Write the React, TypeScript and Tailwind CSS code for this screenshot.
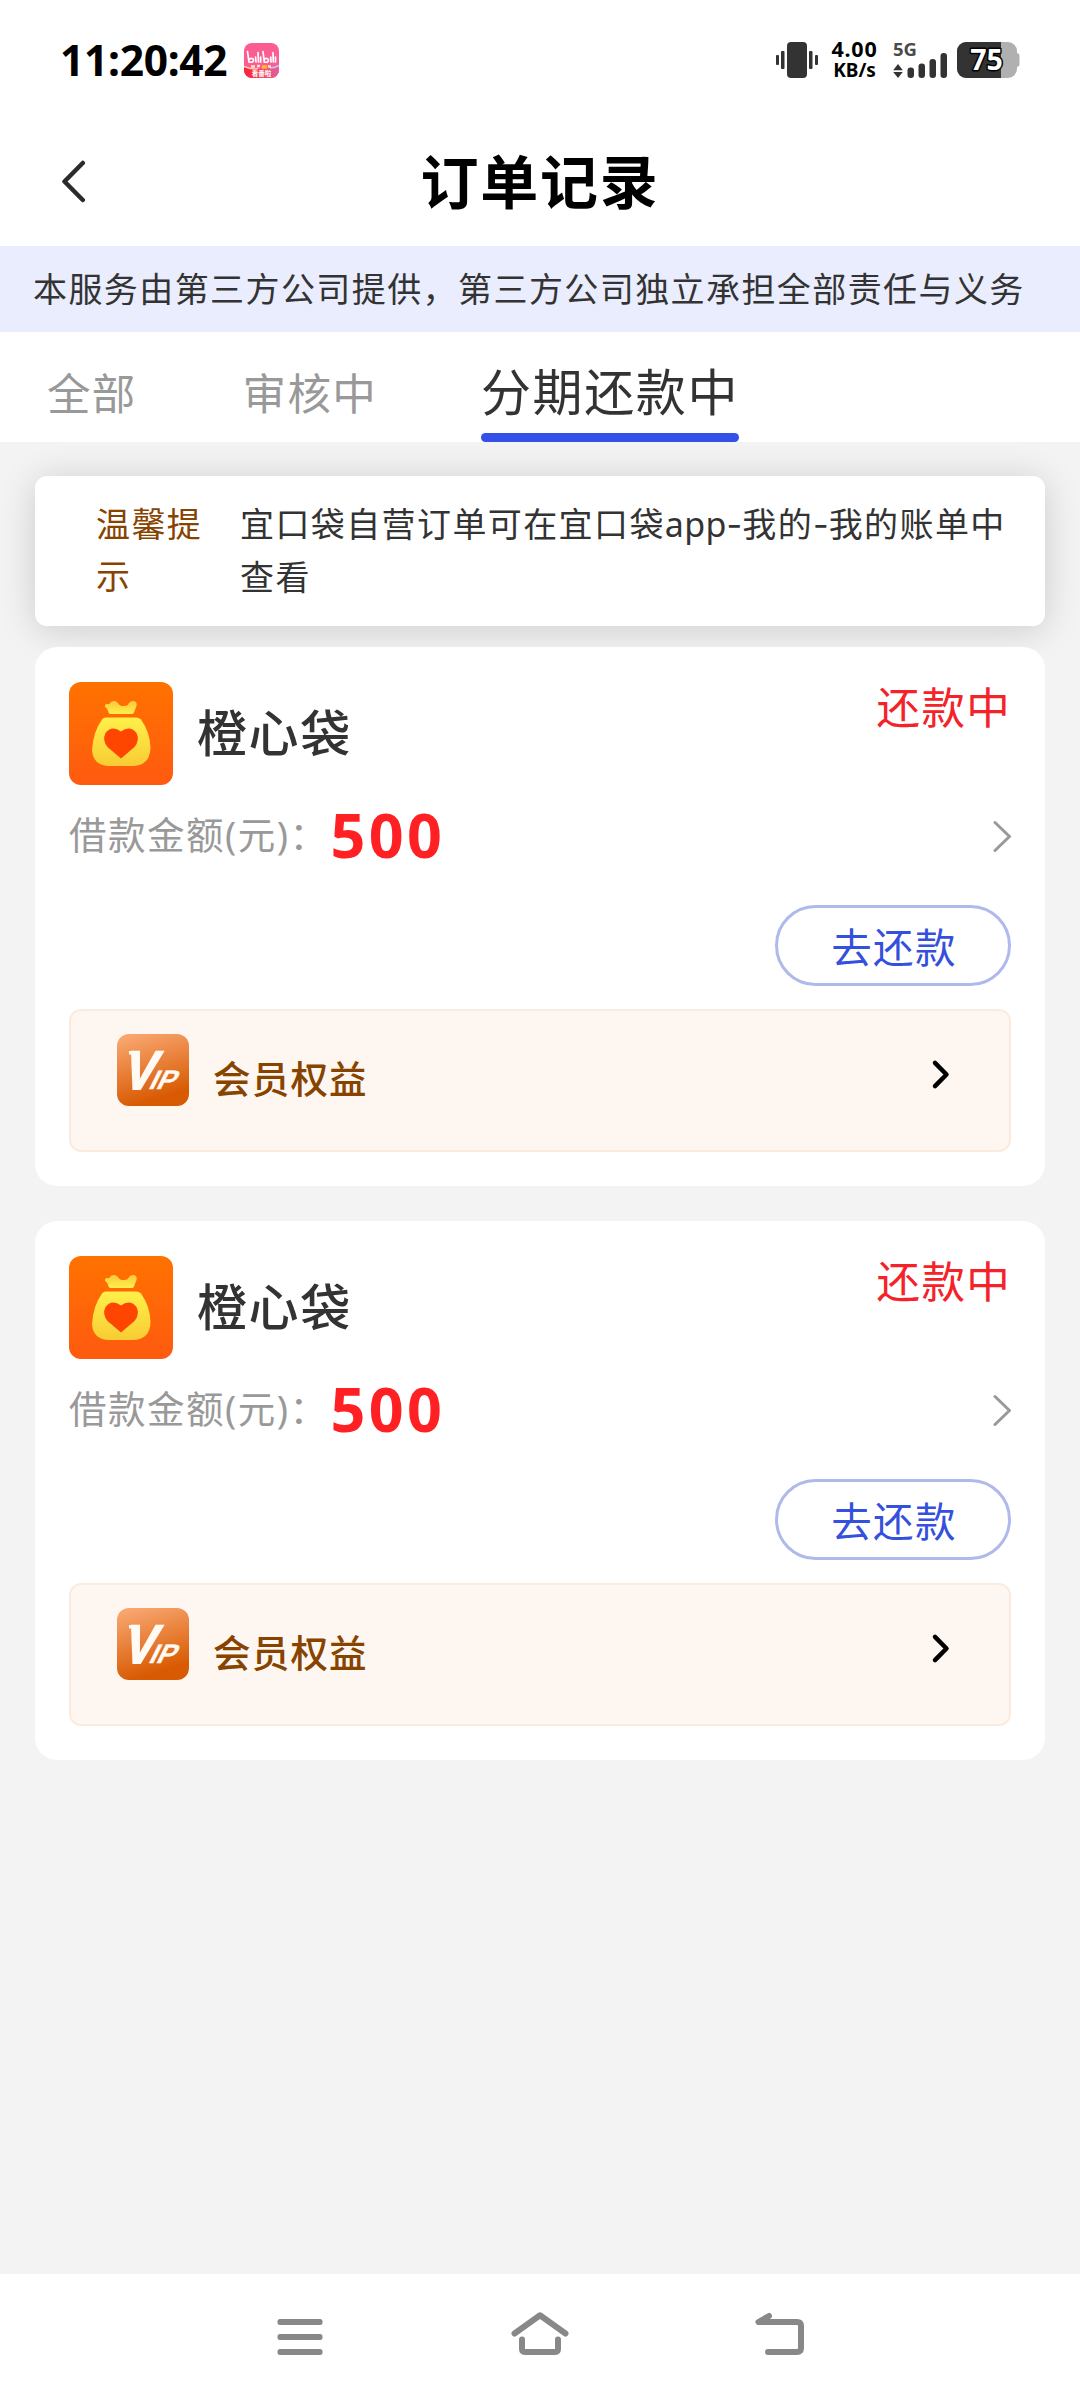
import React from "react";

function StatusBar() {
  return (
    <div className="flex h-[120px] shrink-0 items-center pl-[60px] pr-[60px]">
      <span className="flex w-[184px] whitespace-nowrap text-[42.500px] font-bold leading-[42px] tracking-[-0.300px] text-black">
        11:20:42
      </span>
      <svg width="35" height="35" viewBox="0 0 35 35">
        <defs>
          <linearGradient id="appBottom" x1="0" y1="0" x2="1" y2="0">
            <stop offset="0" stopColor="#fb1f35" />
            <stop offset="0.6" stopColor="#f3486a" />
            <stop offset="1" stopColor="#e0609c" />
          </linearGradient>
          <clipPath id="appClip">
            <rect width="35" height="35" rx="8" />
          </clipPath>
        </defs>
        <g clipPath="url(#appClip)">
          <rect width="35" height="35" fill="#fb5c92" />
          <path d="M0 23 Q17 29 35 23 V35 H0 Z" fill="url(#appBottom)" />
          <path d="M0 23.5 Q8 27 14 25.5" stroke="#ffd0b0" strokeWidth="1.4" fill="none" />
          <path d="M26 25 Q31 25 35 22.5" stroke="#b9c6ff" strokeWidth="1.6" fill="none" />
          <g stroke="#fff" strokeWidth="1.700" strokeLinecap="round" fill="none">
            <path d="M3.500 8.500 L5 19 Q9.500 20 9.500 17 Q9 14.500 5.500 16" />
            <path d="M11.500 14 L12 19 M14 9.500 L14.500 19 M16.700 14 V19" />
            <path d="M19 8.500 L20.300 19 Q24.500 20 24.500 17 Q24 14.500 20.500 16" />
            <path d="M26.700 14 L27 19 M29 9.500 L29.300 19 M31.500 14 V19" />
          </g>
          <path d="M7 23.500h4M13 23h3M24 23.500h3" stroke="#ffe1c4" strokeWidth="2.400" />
          <path d="M18 24h5" stroke="#ffc21c" strokeWidth="3.500" />
          <text x="17.500" y="33.300" fontSize="6.500" fontWeight="700" fill="#fff" textAnchor="middle">
            看番啦
          </text>
        </g>
      </svg>
      <div className="ml-auto flex h-[36px] items-stretch">
        <svg width="42" height="36" viewBox="0 0 42 36" fill="#333">
          <rect x="0" y="13" width="3" height="10" rx="1" />
          <rect x="5" y="9" width="3.500" height="18" rx="1" />
          <rect x="11" y="0" width="20" height="36" rx="4" />
          <rect x="33" y="9" width="3.500" height="18" rx="1" />
          <rect x="39" y="13" width="3" height="10" rx="1" />
        </svg>
        <div className="ml-[13px] flex w-[47px] flex-col items-center whitespace-nowrap font-bold text-black">
          <span className="h-[17px] text-[21.500px] leading-[14px] tracking-[0.800px]">4.00</span>
          <span className="h-[19px] text-[19px] leading-[22px]">KB/s</span>
        </div>
        <svg className="ml-[15px] overflow-visible" width="55" height="36" viewBox="0 0 55 36" fill="#333">
          <text x="0" y="13.800" fontSize="18.500" fontWeight="700" fill="#4a4a4a">5G</text>
          <path d="M5 22 L9.800 28.200 H0.200 Z M0.200 30 H9.800 L5 36 Z" />
          <rect x="14.500" y="25.500" width="6.500" height="10.500" rx="3" />
          <rect x="25.500" y="21.500" width="6.500" height="14.500" rx="3" />
          <rect x="36.500" y="17" width="6.500" height="19" rx="3" />
          <rect x="47.500" y="11" width="6.500" height="25" rx="3" />
        </svg>
        <svg className="ml-[9px] overflow-visible" width="63" height="36" viewBox="0 0 63 36">
          <defs>
            <clipPath id="cell">
              <rect width="60" height="36" rx="9" />
            </clipPath>
          </defs>
          <rect x="56" y="11" width="6.500" height="14" rx="3" fill="#b0b0b0" />
          <g clipPath="url(#cell)">
            <rect width="60" height="36" fill="#b0b0b0" />
            <rect width="44" height="36" fill="#333" />
          </g>
          <text
            x="29.500"
            y="28.300"
            fontSize="28.500"
            fontWeight="700"
            textAnchor="middle"
            fill="#fff"
            stroke="#000"
            strokeWidth="3"
            paintOrder="stroke"
            strokeLinejoin="round"
          >
            75
          </text>
        </svg>
      </div>
    </div>
  );
}

function TitleBar() {
  return (
    <div className="grid h-[126px] shrink-0 grid-cols-[1fr_auto_1fr] items-center pb-[3px] pl-[61px] pr-[61px]">
      <svg width="26" height="44" viewBox="0 0 26 44" fill="none" stroke="#2b2b2b" strokeWidth="4.500" strokeLinecap="round" strokeLinejoin="round">
        <path d="M21.800 3 L3.500 21.500 L21.800 40" />
      </svg>
      <h1 className="text-[58px] font-bold leading-[72px] tracking-[1.800px] text-black">订单记录</h1>
      <span />
    </div>
  );
}

function Tabs() {
  return (
    <div className="flex h-[110px] shrink-0 items-stretch bg-white pl-[47px] leading-[60px]">
      <div className="mr-[106px] pt-[31px] text-[43.500px] tracking-[1.300px] text-[#999]">全部</div>
      <div className="mr-[104px] pt-[31px] text-[43.500px] tracking-[1.300px] text-[#999]">审核中</div>
      <div className="flex flex-col justify-between pt-[30px] text-[50px] tracking-[1.600px] text-[#333]">
        分期还款中
        <div className="h-[9px] rounded-full bg-[#3550e8]" />
      </div>
    </div>
  );
}

function PouchLogo() {
  return (
    <svg width="104" height="103" viewBox="0 0 104 103">
      <defs>
        <linearGradient id="pouchBg" x1="0" y1="0" x2="0" y2="1">
          <stop offset="0" stopColor="#ff7200" />
          <stop offset="1" stopColor="#ff5a10" />
        </linearGradient>
        <linearGradient id="pouchBag" x1="0" y1="0" x2="0" y2="1">
          <stop offset="0" stopColor="#fff04a" />
          <stop offset="1" stopColor="#f8cc34" />
        </linearGradient>
        <linearGradient id="pouchTop" x1="0" y1="0" x2="0" y2="1">
          <stop offset="0" stopColor="#f9c83a" />
          <stop offset="1" stopColor="#fff04a" />
        </linearGradient>
      </defs>
      <rect width="104" height="103" rx="12" fill="url(#pouchBg)" />
      <path
        d="M36 23 Q37 21.500 40 22.300 Q42 18.500 46 19 Q48.500 19.500 50 22.500 Q52 24.500 55 24 Q59 24 60 21 Q62 18.500 65 19 Q68.500 20 67.500 24 L65 30.500 Q64.500 32 62.500 32 H42 Q40 32 39.500 30.500 Q38.500 26 36 25 Z"
        fill="url(#pouchTop)"
      />
      <path
        d="M37 35.500 H67 Q70 35.500 72 37.500 Q81 50 81.500 66 Q81 83 65 84 H39 Q24 83 23 68 Q24 50 33 37.500 Q34.500 35.500 37 35.500 Z"
        fill="url(#pouchBag)"
      />
      <path
        d="M52 76.500 L38.500 65 Q33 58 36.500 51 Q43 43 52 49.500 Q61 43 67.500 51 Q71 58 65.500 65 Z"
        fill="#ff4600"
      />
    </svg>
  );
}

function VipBadge() {
  return (
    <svg width="72" height="72" viewBox="0 0 72 72">
      <defs>
        <linearGradient id="vipBg" x1="0.300" y1="0" x2="0.600" y2="1">
          <stop offset="0" stopColor="#f8a56e" />
          <stop offset="0.900" stopColor="#d85a02" />
        </linearGradient>
      </defs>
      <rect width="72" height="72" rx="12" fill="url(#vipBg)" />
      <g fill="#fffaf3" stroke="#fffaf3" fontFamily="Liberation Sans" fontWeight="700">
        <text transform="matrix(0.88 0 -0.287 1 4 54.500)" fontSize="54" strokeWidth="2">V</text>
        <text transform="matrix(1 0 -0.500 1 30.500 54.800)" fontSize="27" strokeWidth="0.300">IP</text>
      </g>
      <path d="M12 17 h8 v3.500 h-8 Z" fill="#fffaf3" />
    </svg>
  );
}

function OrderCard() {
  return (
    <section className="flex h-[539px] shrink-0 flex-col rounded-[22px] bg-white px-[34px] pt-[35px]">
      <div className="flex h-[103px] items-start">
        <PouchLogo />
        <div className="ml-[24px] pt-[16px] text-[50px] font-medium leading-[70px] tracking-[1.600px] text-[#333]">橙心袋</div>
        <div className="ml-auto text-[43.500px] leading-[50px] tracking-[1.300px] text-[#f5222a]">还款中</div>
      </div>
      <div className="mt-[10px] flex h-[80px] items-center">
        <span className="text-[37.500px] tracking-[1.500px] text-[#999]">借款金额(元)：</span>
        <span className="ml-[2px] pb-[1px] text-[61px] font-bold leading-[79px] tracking-[3.300px] text-[#ff2024]">500</span>
        <svg className="ml-auto mt-[1px]" width="20" height="32" viewBox="0 0 20 32" fill="none" stroke="#999" strokeWidth="3" strokeLinecap="round" strokeLinejoin="round">
          <path d="M4 2.500 L18.500 16.500 L4 30.500" />
        </svg>
      </div>
      <button className="mt-[30px] flex h-[81px] w-[236px] shrink-0 items-center justify-center self-end rounded-full border-[3px] border-[#b0b9ec] pl-[2px] pt-[4px] text-[40.500px] leading-[60px] tracking-[1.300px] text-[#3550dc]">
        去还款
      </button>
      <div className="mt-[23px] flex h-[143px] items-start rounded-[12px] border-2 border-[#fbebdf] bg-[#fef7f1] pl-[46px] pr-[58px] pt-[23px]">
        <VipBadge />
        <span className="ml-[24px] pt-[15px] text-[37.500px] font-medium leading-[60px] tracking-[1.200px] text-[#874300]">会员权益</span>
        <svg className="ml-auto mt-[24px]" width="20" height="32" viewBox="0 0 20 32" fill="none" stroke="#000" strokeWidth="4.500" strokeLinecap="round" strokeLinejoin="round">
          <path d="M4 4.800 L15.500 16.500 L4 28.200" />
        </svg>
      </div>
    </section>
  );
}

function NavBar() {
  return (
    <nav className="flex h-[126px] shrink-0 items-start justify-center gap-[180px] bg-white pt-[36px]">
      <svg width="60" height="48" viewBox="270 2310 60 48" fill="#888">
        <rect x="277.500" y="2319" width="45" height="6" rx="2.500" />
        <rect x="277.500" y="2334" width="45" height="6" rx="2.500" />
        <rect x="277.500" y="2349" width="45" height="6" rx="2.500" />
      </svg>
      <svg width="60" height="48" viewBox="510 2310 60 48" fill="none" stroke="#888" strokeWidth="6" strokeLinecap="round" strokeLinejoin="round">
        <path d="M514.500 2333.500 L540 2315.200 L565.500 2333.500" />
        <path d="M522 2339.500 V2349 Q522 2352 526 2352 H554 Q558 2352 558 2349 V2339.500" />
      </svg>
      <svg width="60" height="48" viewBox="750 2310 60 48" fill="none" stroke="#888" strokeWidth="6" strokeLinecap="round" strokeLinejoin="round">
        <path d="M769 2316 L758.500 2322 H797 Q801 2322 801 2326 V2348 Q801 2352 797 2352 H768" />
      </svg>
    </nav>
  );
}

function Dash() {
  return <span className="font-['Inter'] tracking-[0px]">-</span>;
}

export default function App() {
  return (
    <div className="flex h-[2400px] w-[1080px] flex-col overflow-hidden bg-white font-['Noto_Sans','Noto_Sans_CJK_SC',sans-serif]">
      <StatusBar />
      <TitleBar />
      <div className="flex h-[86px] shrink-0 items-center whitespace-nowrap bg-[#eaedfd] pl-[33px] text-[34px] leading-[50px] tracking-[1.420px] text-[#333]">
        本服务由第三方公司提供，第三方公司独立承担全部责任与义务
      </div>
      <Tabs />
      <main className="flex flex-1 flex-col overflow-hidden bg-[#f3f3f3] px-[35px] pt-[34px]">
        <div className="flex h-[150px] shrink-0 rounded-[12px] bg-white pl-[61px] pt-[22px] text-[34px] leading-[52px] tracking-[1.400px] shadow-[0_4px_36px_rgba(0,0,0,0.16)]">
          <div className="w-[110px] text-[#874300]">温馨提示</div>
          <div className="ml-[34px] w-[776px] text-[#333]">
            宜口袋自营订单可在宜口袋<span className="tracking-[0.300px]">app</span>
            <Dash />
            我的
            <Dash />
            我的账单中查看
          </div>
        </div>
        <div className="relative mt-[21px] flex flex-col gap-[35px]">
          <OrderCard />
          <OrderCard />
        </div>
      </main>
      <NavBar />
    </div>
  );
}
